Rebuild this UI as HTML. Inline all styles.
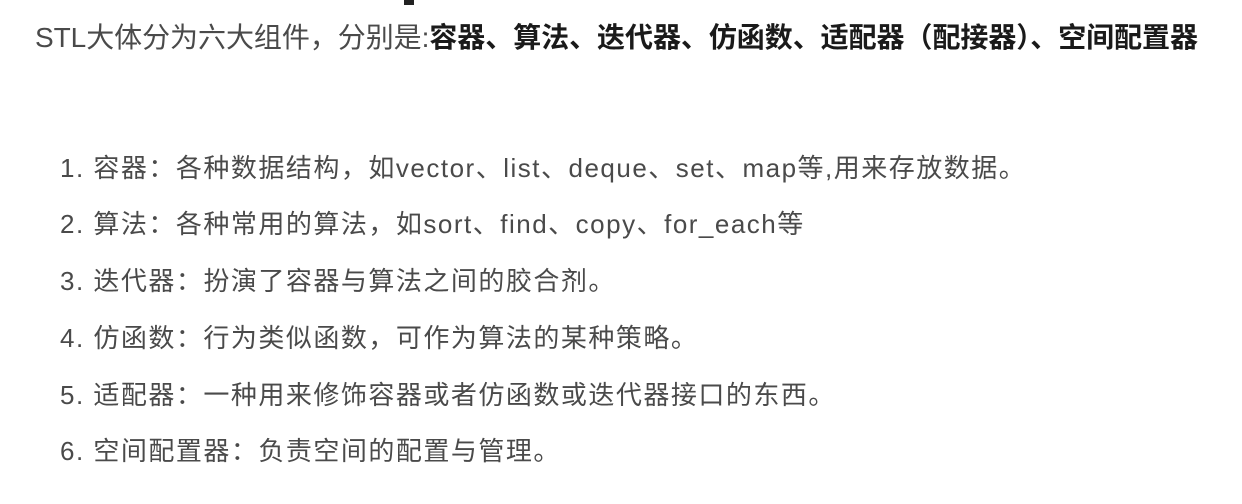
<!DOCTYPE html>
<html><head><meta charset="utf-8"><style>
body{margin:0;width:1242px;height:504px;background:#fff;overflow:hidden;position:relative;font-family:"Liberation Sans","Noto Sans CJK SC",sans-serif;color:#4a4a4a}
.h{position:absolute;left:35px;top:19px;font-size:28px;line-height:38px;white-space:nowrap;letter-spacing:-0.05px}
.h b{color:#1a1a1a}
.l{position:absolute;left:60px;font-size:26px;line-height:34px;white-space:nowrap;letter-spacing:1.5px}
.mk{position:absolute;left:404px;top:0;width:10px;height:5px;background:#222}
</style></head><body>
<div class="mk"></div>
<div class="h">STL大体分为六大组件，分别是:<b>容器、算法、迭代器、仿函数、适配器（配接器）、空间配置器</b></div>
<div class="l" style="top:151px">1. 容器：各种数据结构，如vector、list、deque、set、map等,用来存放数据。</div>
<div class="l" style="top:207px">2. 算法：各种常用的算法，如sort、find、copy、for_each等</div>
<div class="l" style="top:264px">3. 迭代器：扮演了容器与算法之间的胶合剂。</div>
<div class="l" style="top:321px">4. 仿函数：行为类似函数，可作为算法的某种策略。</div>
<div class="l" style="top:378px">5. 适配器：一种用来修饰容器或者仿函数或迭代器接口的东西。</div>
<div class="l" style="top:434px">6. 空间配置器：负责空间的配置与管理。</div>
</body></html>
